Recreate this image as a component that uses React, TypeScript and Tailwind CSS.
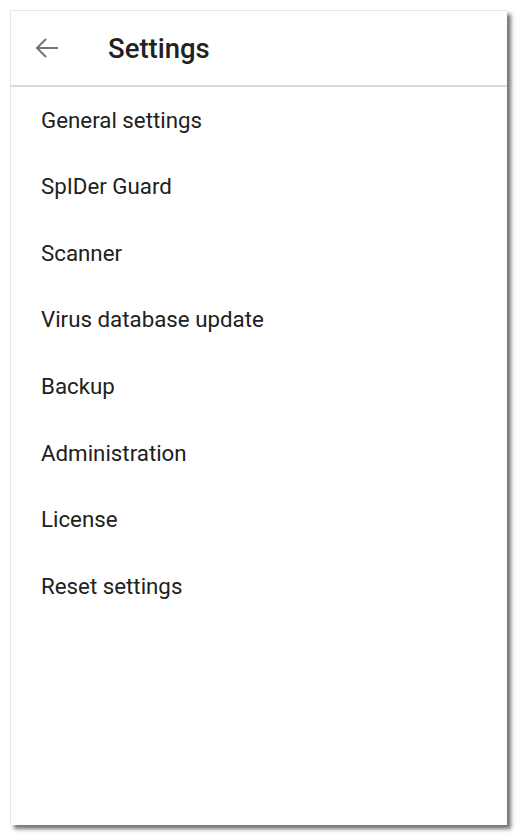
import React from "react";

const items = [
  "General settings",
  "SpIDer Guard",
  "Scanner",
  "Virus database update",
  "Backup",
  "Administration",
  "License",
  "Reset settings",
];

export default function App() {
  return (
    <div
      className="w-[518px] h-[836px] bg-white pt-[10px] pl-[10px]"
      style={{ fontFamily: "Roboto, 'Liberation Sans', sans-serif" }}
    >
      <div className="w-[497px] h-[815px] bg-white border-t border-l border-[#e4e4e4] shadow-[4px_4px_4px_rgba(0,0,0,0.55)] flex flex-col">
        <div className="h-[76px] flex items-center border-b-2 border-[#dadada] shrink-0">
          <svg
            width="24"
            height="22"
            viewBox="0 0 24 22"
            className="ml-[24px]"
            fill="none"
            stroke="#757575"
            strokeWidth="2"
          >
            <path d="M2 11H23" />
            <path d="M11 2L2 11L11 20" />
          </svg>
          <span className="ml-[49px] mt-[2px] text-[27.5px] font-medium text-[#212121]">
            Settings
          </span>
        </div>
        <div className="flex flex-col">
          {items.map((t) => (
            <div
              key={t}
              className="h-[66.6px] flex items-center pl-[30px] text-[22.3px] text-[#212121]"
            >
              {t}
            </div>
          ))}
        </div>
      </div>
    </div>
  );
}
